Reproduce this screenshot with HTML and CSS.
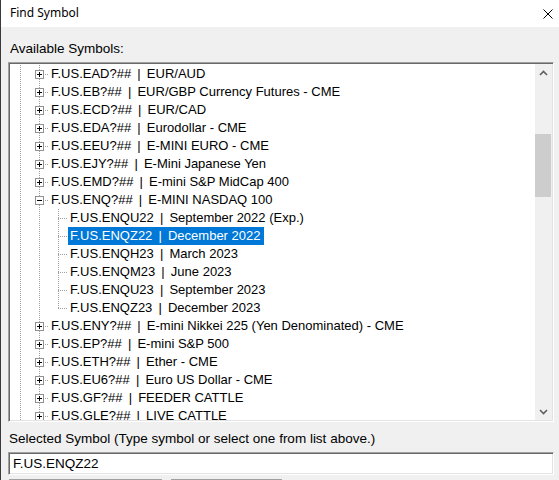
FILE: index.html
```html
<!DOCTYPE html>
<html>
<head>
<meta charset="utf-8">
<title>Find Symbol</title>
<link rel="stylesheet" href="styles.css">
</head>
<body>
<div class="window">
  <div class="titlebar">
    <span class="title">Find Symbol</span>
    <svg class="close" width="10" height="10" viewBox="0 0 10 10"><path d="M0.5 0.5L9.5 9.5M9.5 0.5L0.5 9.5" stroke="#000" stroke-width="1" fill="none"/></svg>
  </div>
  <div class="content">
    <div class="label first">Available Symbols:</div>
    <div class="tree sunken">
      <div class="rows">
        <div class="row"><span class="cell v"></span><span class="cell v h"><i class="box plus"></i></span><span class="text">F.US.EAD?## <span class="sep">|</span> EUR/AUD</span></div>
        <div class="row"><span class="cell v"></span><span class="cell v h"><i class="box plus"></i></span><span class="text">F.US.EB?## <span class="sep">|</span> EUR/GBP Currency Futures - CME</span></div>
        <div class="row"><span class="cell v"></span><span class="cell v h"><i class="box plus"></i></span><span class="text">F.US.ECD?## <span class="sep">|</span> EUR/CAD</span></div>
        <div class="row"><span class="cell v"></span><span class="cell v h"><i class="box plus"></i></span><span class="text">F.US.EDA?## <span class="sep">|</span> Eurodollar - CME</span></div>
        <div class="row"><span class="cell v"></span><span class="cell v h"><i class="box plus"></i></span><span class="text">F.US.EEU?## <span class="sep">|</span> E-MINI EURO - CME</span></div>
        <div class="row"><span class="cell v"></span><span class="cell v h"><i class="box plus"></i></span><span class="text">F.US.EJY?## <span class="sep">|</span> E-Mini Japanese Yen</span></div>
        <div class="row"><span class="cell v"></span><span class="cell v h"><i class="box plus"></i></span><span class="text">F.US.EMD?## <span class="sep">|</span> E-mini S&amp;P MidCap 400</span></div>
        <div class="row"><span class="cell v"></span><span class="cell v h"><i class="box minus"></i></span><span class="text">F.US.ENQ?## <span class="sep">|</span> E-MINI NASDAQ 100</span></div>
        <div class="row"><span class="cell v"></span><span class="cell v"></span><span class="cell v h"></span><span class="text">F.US.ENQU22 <span class="sep">|</span> September 2022 (Exp.)</span></div>
        <div class="row"><span class="cell v"></span><span class="cell v"></span><span class="cell v h"></span><span class="text selected">F.US.ENQZ22 <span class="sep">|</span> December 2022</span></div>
        <div class="row"><span class="cell v"></span><span class="cell v"></span><span class="cell v h"></span><span class="text">F.US.ENQH23 <span class="sep">|</span> March 2023</span></div>
        <div class="row"><span class="cell v"></span><span class="cell v"></span><span class="cell v h"></span><span class="text">F.US.ENQM23 <span class="sep">|</span> June 2023</span></div>
        <div class="row"><span class="cell v"></span><span class="cell v"></span><span class="cell v h"></span><span class="text">F.US.ENQU23 <span class="sep">|</span> September 2023</span></div>
        <div class="row"><span class="cell v"></span><span class="cell v"></span><span class="cell corner h"></span><span class="text">F.US.ENQZ23 <span class="sep">|</span> December 2023</span></div>
        <div class="row"><span class="cell v"></span><span class="cell v h"><i class="box plus"></i></span><span class="text">F.US.ENY?## <span class="sep">|</span> E-mini Nikkei 225 (Yen Denominated) - CME</span></div>
        <div class="row"><span class="cell v"></span><span class="cell v h"><i class="box plus"></i></span><span class="text">F.US.EP?## <span class="sep">|</span> E-mini S&amp;P 500</span></div>
        <div class="row"><span class="cell v"></span><span class="cell v h"><i class="box plus"></i></span><span class="text">F.US.ETH?## <span class="sep">|</span> Ether - CME</span></div>
        <div class="row"><span class="cell v"></span><span class="cell v h"><i class="box plus"></i></span><span class="text">F.US.EU6?## <span class="sep">|</span> Euro US Dollar - CME</span></div>
        <div class="row"><span class="cell v"></span><span class="cell v h"><i class="box plus"></i></span><span class="text">F.US.GF?## <span class="sep">|</span> FEEDER CATTLE</span></div>
        <div class="row"><span class="cell v"></span><span class="cell v h"><i class="box plus"></i></span><span class="text">F.US.GLE?## <span class="sep">|</span> LIVE CATTLE</span></div>
      </div>
      <div class="scrollbar">
        <div class="arrow"><svg width="9" height="6" viewBox="0 0 9 6"><path d="M1 5L4.5 1.5L8 5" stroke="#606060" stroke-width="1.6" fill="none"/></svg></div>
        <div class="track">
          <div class="thumb"></div>
        </div>
        <div class="arrow"><svg width="9" height="6" viewBox="0 0 9 6"><path d="M1 1L4.5 4.5L8 1" stroke="#606060" stroke-width="1.6" fill="none"/></svg></div>
      </div>
    </div>
    <div class="label second">Selected Symbol (Type symbol or select one from list above.)</div>
    <div class="input sunken">F.US.ENQZ22</div>
    <div class="buttons">
      <div class="btn wide"></div>
      <div class="btn"></div>
    </div>
  </div>
</div>
</body>
</html>
```

FILE: styles.css
```css
html, body {
  margin: 0;
  padding: 0;
  background: #f0f0f0;
}

body {
  width: 559px;
  height: 480px;
  overflow: hidden;
  font-family: "Liberation Sans", Arial, sans-serif;
  font-size: 13px;
  color: #000;
}

.window {
  height: 480px;
  border-left: 1px solid #3a3a3a;
  background: #f0f0f0;
  display: flex;
  flex-direction: column;
}

.titlebar {
  height: 27px;
  flex: none;
  background: #fff;
  display: flex;
  align-items: center;
  justify-content: space-between;
  padding: 0 6px 0 9px;
}

.title {
  font-family: "Noto Sans", "Open Sans", sans-serif;
  font-size: 12px;
  position: relative;
  top: -1px;
}

.close {
  display: block;
}

.content {
  padding: 0 5px 0 7px;
}

.label {
  font-size: 13.5px;
  line-height: 16px;
  height: 16px;
}

.label.first {
  margin-top: 14px;
  margin-left: 2px;
  margin-bottom: 5px;
}

.label.second {
  margin-top: 9px;
  margin-left: 1px;
  margin-bottom: 5px;
}

/* 3D sunken frame used by the list and the edit field */
.sunken {
  border: 1px solid;
  border-color: #a0a0a0 #ffffff #ffffff #a0a0a0;
  box-shadow: inset 1px 1px 0 #696969, inset -1px -1px 0 #e3e3e3;
  background: #fff;
}

.tree {
  height: 356px;
  display: flex;
  padding: 1px;
  overflow: hidden;
}

.rows {
  flex: 1;
  overflow: hidden;
  padding-left: 1px;
  padding-top: 1px;
}

.row {
  display: flex;
  height: 18px;
  align-items: center;
  white-space: nowrap;
}

/* tree connector cells */
.cell {
  position: relative;
  flex: none;
  width: 19px;
  height: 18px;
}

.cell.v::before,
.cell.corner::before {
  content: "";
  position: absolute;
  left: 9px;
  top: 0;
  bottom: 0;
  width: 1px;
  background: repeating-linear-gradient(to bottom, #a0a0a0 0 1px, transparent 1px 2px);
}

.cell.corner::before {
  bottom: 9px;
}

.cell.h::after {
  content: "";
  position: absolute;
  left: 9px;
  right: 0;
  top: 9px;
  height: 1px;
  background: repeating-linear-gradient(to right, #a0a0a0 0 1px, transparent 1px 2px);
}

.box {
  position: absolute;
  left: 5px;
  top: 5px;
  width: 7px;
  height: 7px;
  border: 1px solid #919191;
  background: #fff;
  z-index: 1;
}

.box::before {
  content: "";
  position: absolute;
  left: 1px;
  top: 3px;
  width: 5px;
  height: 1px;
  background: #000;
}

.box.plus::after {
  content: "";
  position: absolute;
  left: 3px;
  top: 1px;
  width: 1px;
  height: 5px;
  background: #000;
}

.text {
  padding: 0 2px;
  line-height: 18px;
  height: 18px;
}

.sep {
  padding: 0 2.5px;
}

.text.selected {
  background: #0078d7;
  color: #fff;
  padding-right: 4px;
}

/* vertical scrollbar */
.scrollbar {
  width: 17px;
  flex: none;
  background: #f0f0f0;
  display: flex;
  flex-direction: column;
}

.arrow {
  height: 17px;
  flex: none;
  display: flex;
  align-items: center;
  justify-content: center;
}

.track {
  flex: 1;
  padding-top: 53px;
}

.thumb {
  height: 63px;
  margin: 0 1px 0 0;
  background: #cdcdcd;
}

.input {
  height: 21px;
  line-height: 21px;
  padding-left: 4px;
  font-size: 13.5px;
}

.buttons {
  display: flex;
  gap: 9px;
  margin-top: 4px;
  padding-left: 1px;
}

.btn {
  height: 10px;
  width: 110px;
  border-top: 1px solid #a0a0a0;
  border-left: 1px solid #a0a0a0;
  background: #f0f0f0;
}

.btn.wide {
  width: 152px;
}
```
